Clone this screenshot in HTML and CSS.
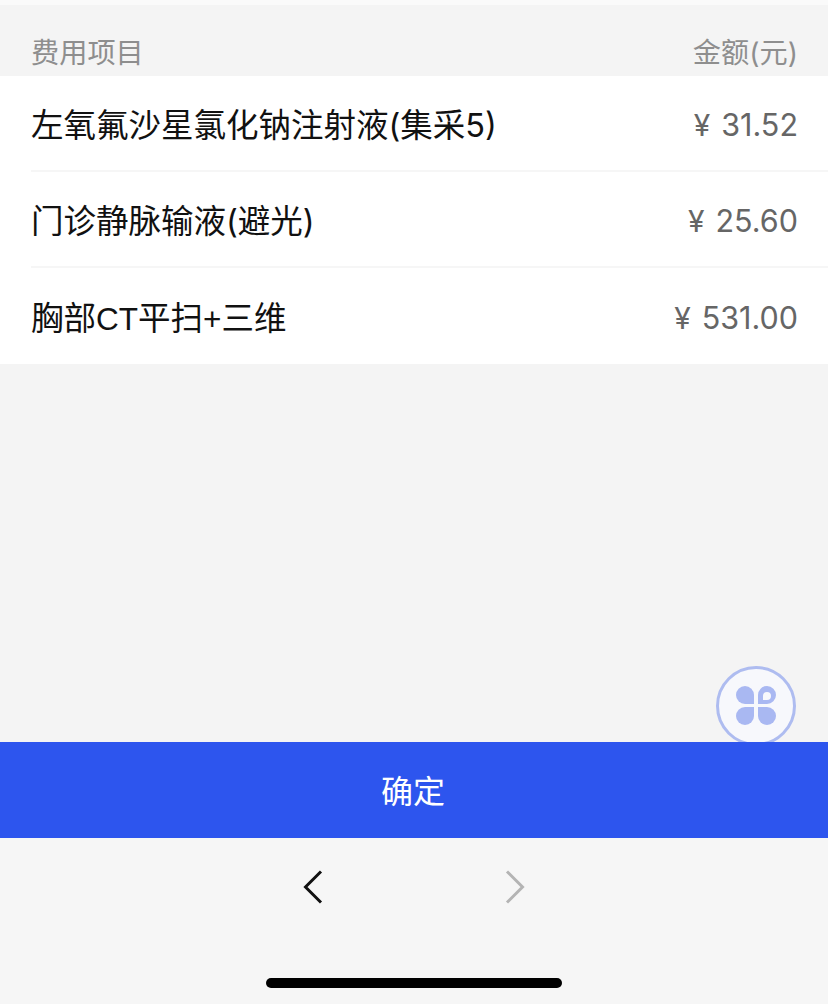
FILE: index.html
```html
<!DOCTYPE html>
<html lang="zh-CN">
<head>
<meta charset="utf-8">
<title>费用项目</title>
<link rel="stylesheet" href="styles.css">
</head>
<body>
<div class="page">
  <main class="content">
    <div class="head"><span>费用项目</span><span>金额(元)</span></div>
    <ul class="list">
      <li class="row"><span class="name">左氧氟沙星氯化钠注射液(集采5)</span><span class="price"><span class="yen">¥</span>31.52</span></li>
      <li class="row"><span class="name">门诊静脉输液(避光)</span><span class="price"><span class="yen">¥</span>25.60</span></li>
      <li class="row"><span class="name">胸部<span class="latin">CT</span>平扫<span class="latin">+</span>三维</span><span class="price"><span class="yen">¥</span>531.00</span></li>
    </ul>
    <div class="fab">
      <svg viewBox="0 0 40 40" width="40" height="40">
        <path fill="#a9b8f2" d="M9 0A9 9 0 0 1 18 9V18H9A9 9 0 0 1 9 0Z"/>
        <path fill="#a9b8f2" fill-rule="evenodd" d="M31 0A9 9 0 0 1 31 18H22V9A9 9 0 0 1 31 0ZM31 6A4 4 0 0 0 27 10V14H31A4 4 0 0 0 31 6Z"/>
        <path fill="#a9b8f2" d="M9 39A9 9 0 0 1 9 21H18V30A9 9 0 0 1 9 39Z"/>
        <path fill="#a9b8f2" d="M31 39A9 9 0 0 1 22 30V21H31A9 9 0 0 1 31 39Z"/>
      </svg>
    </div>
  </main>
  <button class="confirm">确定</button>
  <nav class="nav">
    <svg class="arrow" viewBox="0 0 20 34" width="20" height="34"><path d="M18 1.500 2.500 17 18 32.500" fill="none" stroke="#111" stroke-width="3"/></svg>
    <svg class="arrow" viewBox="0 0 20 34" width="20" height="34"><path d="M2 1.500 17.500 17 2 32.500" fill="none" stroke="#b4b4b4" stroke-width="3"/></svg>
  </nav>
  <div class="home-wrap"><div class="home"></div></div>
</div>
</body>
</html>
```
FILE: styles.css
```css
* { box-sizing: border-box; margin: 0; padding: 0; }
html, body { width: 828px; height: 1004px; overflow: hidden; }
body { font-family: "Inter", "Noto Sans CJK SC", sans-serif; background: #f6f6f6; }
.page { display: flex; flex-direction: column; height: 1004px; }
.content { position: relative; height: 742px; padding-top: 5px; background: linear-gradient(#fafafa 0 5px, #f4f4f4 5px); }
.head { display: flex; justify-content: space-between; align-items: flex-end; height: 71px; padding: 0 30px 5px 31px; font-size: 28.200px; line-height: 36px; color: #8e8e8e; }
.list { list-style: none; background: #fff; padding-left: 31px; }
.row { display: flex; justify-content: space-between; align-items: center; height: 96px; padding-right: 30px; border-bottom: 2px solid #f6f6f6; }
.row:last-child { border-bottom: 0; }
.name { font-size: 32.500px; color: #111; position: relative; top: -1px; }
.latin { font-family: "Liberation Sans", sans-serif; font-size: 31.500px; }
.price { font-size: 30.500px; color: #666; position: relative; top: 1px; }
.yen { font-size: 30px; margin-right: 11px; }
.fab { position: absolute; left: 716px; top: 666px; width: 80px; height: 80px; border: 3px solid #aebcf0; border-radius: 50%; background: #f7f8fc; display: flex; align-items: center; justify-content: center; }
.confirm { display: block; width: 100%; height: 96px; border: 0; background: #2d55ee; color: #fff; font: inherit; font-size: 32px; position: relative; padding: 0 2px 3px 0; }
.nav { display: flex; justify-content: center; gap: 182px; height: 98px; padding-top: 32px; background: #f6f6f6; }
.home-wrap { flex: 1; display: flex; justify-content: center; padding-top: 42px; }
.home { width: 296px; height: 10px; border-radius: 5px; background: #000; }
```
